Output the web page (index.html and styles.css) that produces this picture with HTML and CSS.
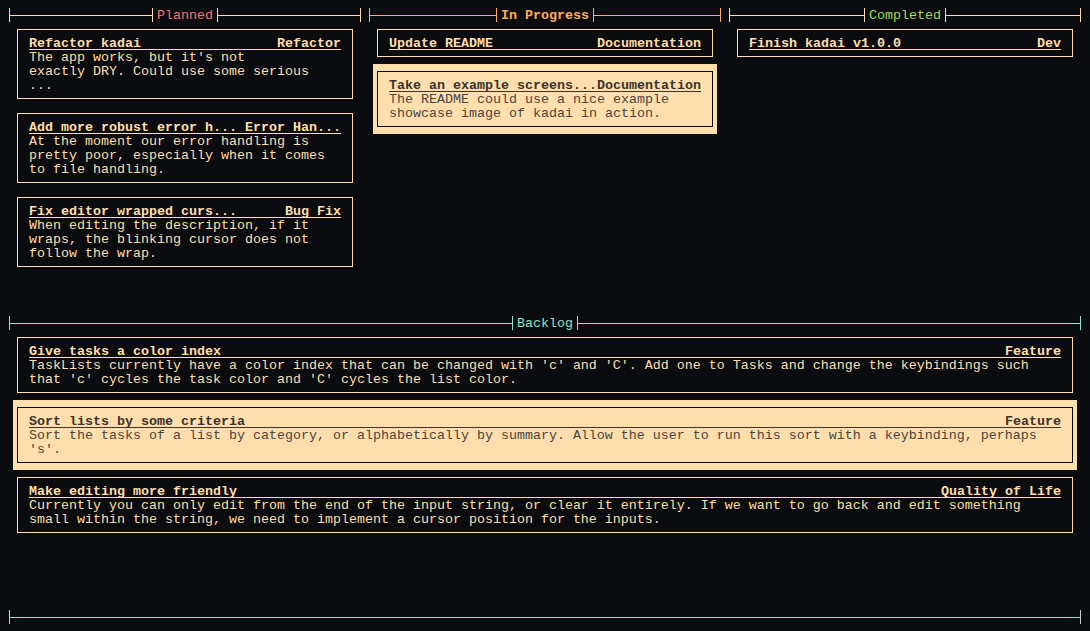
FILE: index.html
```html
<!DOCTYPE html>
<html>
<head>
<meta charset="utf-8">
<link rel="stylesheet" href="styles.css">
</head>
<body>
<div class="screen">
  <div class="top">
    <section class="col">
      <div class="hdr hdr-planned"><span class="seg"></span><span class="label">Planned</span><span class="seg"></span></div>
      <div class="card">
        <div class="box">
          <div class="title"><span>Refactor kadai</span><span>Refactor</span></div>
          <div class="line">The app works, but it's not</div>
          <div class="line">exactly DRY. Could use some serious</div>
          <div class="line">...</div>
        </div>
      </div>
      <div class="card">
        <div class="box">
          <div class="title"><span>Add more robust error h... Error Han...</span></div>
          <div class="line">At the moment our error handling is</div>
          <div class="line">pretty poor, especially when it comes</div>
          <div class="line">to file handling.</div>
        </div>
      </div>
      <div class="card">
        <div class="box">
          <div class="title"><span>Fix editor wrapped curs...</span><span>Bug Fix</span></div>
          <div class="line">When editing the description, if it</div>
          <div class="line">wraps, the blinking cursor does not</div>
          <div class="line">follow the wrap.</div>
        </div>
      </div>
    </section>
    <section class="col">
      <div class="hdr hdr-progress"><span class="seg"></span><span class="label">In Progress</span><span class="seg"></span></div>
      <div class="card">
        <div class="box">
          <div class="title"><span>Update README</span><span>Documentation</span></div>
        </div>
      </div>
      <div class="card selected">
        <div class="box">
          <div class="title"><span>Take an example screens...Documentation</span></div>
          <div class="line">The README could use a nice example</div>
          <div class="line">showcase image of kadai in action.</div>
        </div>
      </div>
    </section>
    <section class="col">
      <div class="hdr hdr-done"><span class="seg"></span><span class="label">Completed</span><span class="seg"></span></div>
      <div class="card">
        <div class="box">
          <div class="title"><span>Finish kadai v1.0.0</span><span>Dev</span></div>
        </div>
      </div>
    </section>
  </div>

  <section class="backlog">
    <div class="hdr hdr-backlog"><span class="seg"></span><span class="label">Backlog</span><span class="seg"></span></div>
    <div class="card wide">
      <div class="box">
        <div class="title"><span>Give tasks a color index</span><span>Feature</span></div>
        <div class="line">TaskLists currently have a color index that can be changed with 'c' and 'C'. Add one to Tasks and change the keybindings such</div>
        <div class="line">that 'c' cycles the task color and 'C' cycles the list color.</div>
      </div>
    </div>
    <div class="card wide selected">
      <div class="box">
        <div class="title"><span>Sort lists by some criteria</span><span>Feature</span></div>
        <div class="line">Sort the tasks of a list by category, or alphabetically by summary. Allow the user to run this sort with a keybinding, perhaps</div>
        <div class="line">'s'.</div>
      </div>
    </div>
    <div class="card wide">
      <div class="box">
        <div class="title"><span>Make editing more friendly</span><span>Quality of Life</span></div>
        <div class="line">Currently you can only edit from the end of the input string, or clear it entirely. If we want to go back and edit something</div>
        <div class="line">small within the string, we need to implement a cursor position for the inputs.</div>
      </div>
    </div>
  </section>

  <div class="footer"><span class="seg"></span></div>
</div>
</body>
</html>
```

FILE: styles.css
```css
html, body {
  margin: 0;
  padding: 0;
  background: #0a0c10;
}

.screen {
  width: 1080px;
  padding: 8px 5px 6px;
  font-family: "Liberation Mono", "DejaVu Sans Mono", monospace;
  font-size: 13.3333px;
  line-height: 14px;
  color: #ffdeaa;
  display: flex;
  flex-direction: column;
}

.top {
  display: grid;
  grid-template-columns: 360px 360px 360px;
  height: 308px;
}

.col {
  display: flex;
  flex-direction: column;
}

/* headers */
.hdr {
  display: grid;
  grid-template-columns: 1fr auto 1fr;
  height: 14px;
  --line: #ffdeaa;
}

.hdr .label {
  white-space: pre;
  box-sizing: border-box;
  height: 14px;
  padding-top: 2px;
  line-height: 12px;
}

.seg {
  display: block;
  height: 14px;
  margin: 0 4px;
  border-left: 1px solid var(--line);
  border-right: 1px solid var(--line);
  background: linear-gradient(to bottom, transparent 7px, var(--line) 7px, var(--line) 8px, transparent 8px);
}

.hdr-planned .label { color: #ff6f6f; }

.hdr-progress { --line: #ffac52; }
.hdr-progress .label { color: #ffac52; font-weight: bold; }

.hdr-done .label { color: #a7db52; }

.hdr-backlog { --line: #8ee4c8; }
.hdr-backlog .label { color: #8ee4c8; }

/* cards */
.card {
  width: 344px;
  margin-left: 8px;
  padding: 7px 4px;
  box-sizing: border-box;
}

.card.wide {
  width: 1064px;
}

.box {
  border: 1px solid #ffdeaa;
  padding: 6px 11px;
}

.title {
  display: flex;
  justify-content: space-between;
  box-sizing: border-box;
  height: 14px;
  padding-top: 2px;
  line-height: 12px;
  overflow: hidden;
  font-weight: bold;
  white-space: pre;
  box-shadow: inset 0 -1px 0 currentColor;
}

.line {
  box-sizing: border-box;
  height: 14px;
  padding-top: 2px;
  line-height: 12px;
  white-space: pre;
}

.card.selected {
  background: #ffdeae;
  color: #4a453e;
}

.card.selected .box {
  border-color: #0a0c10;
}

.card.selected .title {
  color: #3a342d;
}

/* backlog */
.backlog {
  height: 294px;
  display: flex;
  flex-direction: column;
}

.footer {
  height: 14px;
  display: flex;
  flex-direction: column;
  --line: #8ee4c8;
}

.footer .seg {
  border-left-color: #c9d2cf;
  border-right-color: #c9d2cf;
}
```
